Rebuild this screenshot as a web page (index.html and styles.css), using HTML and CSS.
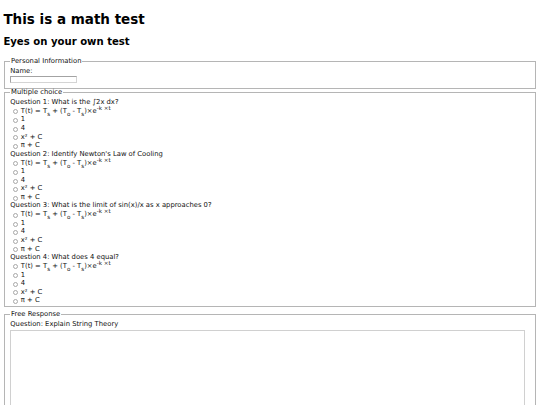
FILE: index.html
```html
<!DOCTYPE html>
<html>
<head>
<meta charset="utf-8">
<title>Math test</title>
<link rel="stylesheet" href="styles.css">
</head>
<body>
<h1 class="title">This is a math test</h1>
<h2 class="subtitle">Eyes on your own test</h2>
<form class="test">
  <fieldset class="group">
    <legend class="legend">Personal Information</legend>
    <label class="label">Name:</label>
    <input class="name-input" type="text">
  </fieldset>
  <fieldset class="group choices">
    <legend class="legend">Multiple choice</legend>
    <div class="question">
      <div class="q">Question 1: What is the ∫2x dx?</div>
      <label class="option first"><input class="radio" type="radio" name="q1"><span class="text">T(t) = T<sub>s</sub> + (T<sub>o</sub> - T<sub>s</sub>)×e<sup>-k ×t</sup></span></label>
      <label class="option"><input class="radio" type="radio" name="q1"><span class="text">1</span></label>
      <label class="option"><input class="radio" type="radio" name="q1"><span class="text">4</span></label>
      <label class="option"><input class="radio" type="radio" name="q1"><span class="text">x² + C</span></label>
      <label class="option"><input class="radio" type="radio" name="q1"><span class="text">π + C</span></label>
    </div>
    <div class="question">
      <div class="q">Question 2: Identify Newton's Law of Cooling</div>
      <label class="option first"><input class="radio" type="radio" name="q2"><span class="text">T(t) = T<sub>s</sub> + (T<sub>o</sub> - T<sub>s</sub>)×e<sup>-k ×t</sup></span></label>
      <label class="option"><input class="radio" type="radio" name="q2"><span class="text">1</span></label>
      <label class="option"><input class="radio" type="radio" name="q2"><span class="text">4</span></label>
      <label class="option"><input class="radio" type="radio" name="q2"><span class="text">x² + C</span></label>
      <label class="option"><input class="radio" type="radio" name="q2"><span class="text">π + C</span></label>
    </div>
    <div class="question">
      <div class="q">Question 3: What is the limit of sin(x)/x as x approaches 0?</div>
      <label class="option first"><input class="radio" type="radio" name="q3"><span class="text">T(t) = T<sub>s</sub> + (T<sub>o</sub> - T<sub>s</sub>)×e<sup>-k ×t</sup></span></label>
      <label class="option"><input class="radio" type="radio" name="q3"><span class="text">1</span></label>
      <label class="option"><input class="radio" type="radio" name="q3"><span class="text">4</span></label>
      <label class="option"><input class="radio" type="radio" name="q3"><span class="text">x² + C</span></label>
      <label class="option"><input class="radio" type="radio" name="q3"><span class="text">π + C</span></label>
    </div>
    <div class="question">
      <div class="q">Question 4: What does 4 equal?</div>
      <label class="option first"><input class="radio" type="radio" name="q4"><span class="text">T(t) = T<sub>s</sub> + (T<sub>o</sub> - T<sub>s</sub>)×e<sup>-k ×t</sup></span></label>
      <label class="option"><input class="radio" type="radio" name="q4"><span class="text">1</span></label>
      <label class="option"><input class="radio" type="radio" name="q4"><span class="text">4</span></label>
      <label class="option"><input class="radio" type="radio" name="q4"><span class="text">x² + C</span></label>
      <label class="option"><input class="radio" type="radio" name="q4"><span class="text">π + C</span></label>
    </div>
  </fieldset>
  <fieldset class="group free">
    <legend class="legend">Free Response</legend>
    <label class="label">Question: Explain String Theory</label>
    <textarea class="answer"></textarea>
  </fieldset>
</form>
</body>
</html>
```
FILE: styles.css
```css
html, body {
  background: #fff;
}
body {
  margin: 3.375px;
  font-family: "DejaVu Sans", Verdana, sans-serif;
  font-size: 6.8px;
  line-height: 1.164;
  color: #111;
}
.title {
  font-size: 13.5px;
  font-weight: bold;
  margin: 8.6px 0 8.4px;
  line-height: 1.164;
  color: #000;
}
.subtitle {
  font-size: 10.125px;
  font-weight: bold;
  margin: 8.4px 0 9.9px;
  line-height: 1.164;
  color: #000;
}
.test {
  margin: 0;
}
.group {
  margin: 0 0.84px;
  border: 1px solid #b5b5b5;
  padding: 2.36px 5.06px 4.22px;
  min-width: 0;
}
.choices {
  padding-bottom: 0.4px;
}
.free {
  margin-top: 3.6px;
}
.legend {
  padding: 0 0.84px;
  line-height: 7.86px;
}
.label {
  display: block;
  line-height: 7.86px;
}
.name-input {
  display: block;
  box-sizing: border-box;
  width: 67px;
  height: 7.6px;
  margin: 0;
  padding: 0;
  border: 1px solid #a3a3a3;
  border-right-color: #d4d4d4;
  border-bottom-color: #d4d4d4;
  font: inherit;
}
.q {
  line-height: 7.9px;
  white-space: nowrap;
}
.option {
  display: flex;
  align-items: center;
  height: 8.6px;
  white-space: nowrap;
}
.option.first {
  height: 9.4px;
}
.text {
  line-height: 7.9px;
}
.first .text {
  padding-top: 1px;
}
.radio {
  -webkit-appearance: none;
  appearance: none;
  box-sizing: border-box;
  flex: none;
  width: 5px;
  height: 5px;
  margin: 0.6px 2.4px 0 3.2px;
  padding: 0;
  border: 0.8px solid #a8a8a8;
  border-radius: 50%;
  background: #fff;
}
.option sub,
.option sup {
  font-size: 0.83em;
  line-height: 0;
}
.answer {
  display: block;
  box-sizing: border-box;
  width: 99%;
  height: 120px;
  margin: 1.4px 0 0;
  padding: 1px;
  border: 1px solid #d0d0d0;
  resize: none;
  font: inherit;
}
```
